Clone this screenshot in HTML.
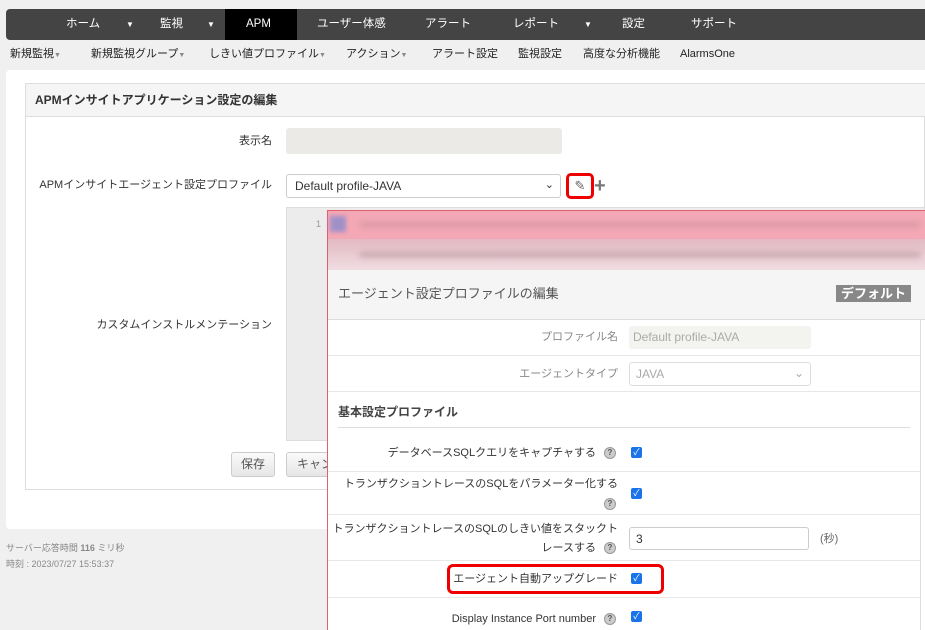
<!DOCTYPE html>
<html><head><meta charset="utf-8"><style>
*{box-sizing:border-box;margin:0;padding:0}
body{width:925px;height:630px;overflow:hidden;background:#f0f0f0;font-family:"Liberation Sans","Noto Sans CJK JP",sans-serif;font-size:11px;color:#333;position:relative}
.a{position:absolute;white-space:nowrap}
.nav{left:6px;top:9px;width:919px;height:31px;background:#444;border-radius:4px 0 0 4px}
.nav span{position:absolute;top:0;line-height:31px;color:#fff;font-size:11.5px}
.sub span{position:absolute;top:46px;font-size:11px;line-height:16px;color:#222}
.car{font-size:7px;color:#888;font-style:normal}
.lbl{text-align:right;font-size:11px;color:#333;line-height:16px}
.cb{width:11px;height:11px;background:#1a73e8;border-radius:2px;color:#fff;font-size:9px;line-height:11px;text-align:center}
.q{width:12px;height:12px;border-radius:50%;background:#ccc;border:1px solid #999;color:#555;font-size:8px;line-height:10px;text-align:center;font-weight:bold}
.ln{height:1px;background:#e8e8e8}
</style></head><body>
<div class="a nav">
<span style="left:60px">ホーム</span><span style="left:120px;font-size:8px">▼</span>
<span style="left:154px">監視</span><span style="left:201px;font-size:8px">▼</span>
<div class="a" style="left:219px;top:0;width:72px;height:31px;background:#000"></div>
<span style="left:240px">APM</span>
<span style="left:311px">ユーザー体感</span>
<span style="left:419px">アラート</span>
<span style="left:507px">レポート</span><span style="left:578px;font-size:8px">▼</span>
<span style="left:616px">設定</span>
<span style="left:685px">サポート</span>
</div>
<div class="sub">
<span style="left:10px">新規監視<i class="car">▼</i></span>
<span style="left:91px">新規監視グループ<i class="car">▼</i></span>
<span style="left:209px">しきい値プロファイル<i class="car">▼</i></span>
<span style="left:346px">アクション<i class="car">▼</i></span>
<span style="left:432px">アラート設定</span>
<span style="left:518px">監視設定</span>
<span style="left:583px">高度な分析機能</span>
<span style="left:680px">AlarmsOne</span>
</div>
<div class="a" style="left:6px;top:70px;width:919px;height:459px;background:#fff;border-radius:4px 0 0 4px"></div>
<div class="a" style="left:25px;top:83px;width:900px;height:407px;border:1px solid #ddd;background:#fff"></div>
<div class="a" style="left:26px;top:84px;width:899px;height:33px;background:#f5f5f5;border-bottom:1px solid #ddd;font-weight:bold;line-height:32px;padding-left:9px;font-size:12px">APMインサイトアプリケーション設定の編集</div>
<div class="a lbl" style="left:100px;top:133px;width:172px">表示名</div>
<div class="a" style="left:286px;top:128px;width:276px;height:26px;background:#eceae6;border-radius:3px"></div>
<div class="a lbl" style="left:20px;top:177px;width:252px">APMインサイトエージェント設定プロファイル</div>
<div class="a" style="left:286px;top:174px;width:275px;height:24px;border:1px solid #ccc;border-radius:3px;padding:4px 8px;font-size:12px;line-height:15px">Default profile-JAVA<span style="position:absolute;right:6px;top:3px;font-size:11px">⌄</span></div>
<div class="a" style="left:566px;top:173px;width:28px;height:26px;border:3px solid #e00;border-radius:5px;color:#666;text-align:center;line-height:20px;font-size:13px">✎</div>
<div class="a" style="left:594px;top:174px;font-size:20px;color:#777;font-weight:bold;line-height:24px">+</div>
<div class="a lbl" style="left:60px;top:317px;width:212px">カスタムインストルメンテーション</div>
<div class="a" style="left:286px;top:207px;width:639px;height:234px;background:#ececec;border:1px solid #ddd"></div>
<div class="a" style="left:316px;top:219px;font-size:9px;color:#999">1</div>
<div class="a" style="left:231px;top:452px;width:44px;height:25px;border:1px solid #ccc;border-radius:3px;background:linear-gradient(#fafafa,#e6e6e6);text-align:center;line-height:23px;color:#555;font-size:12px">保存</div>
<div class="a" style="left:286px;top:452px;width:50px;height:25px;border:1px solid #ccc;border-radius:3px;background:linear-gradient(#fafafa,#e6e6e6);line-height:23px;padding-left:10px;color:#555;font-size:12px;overflow:hidden">キャン</div>
<div class="a" style="left:6px;top:541px;font-size:9px;color:#888">サーバー応答時間 <b>116</b> ミリ秒</div>
<div class="a" style="left:6px;top:557px;font-size:9px;color:#888">時刻 : 2023/07/27 15:53:37</div>
<!-- overlay -->
<div class="a" style="left:327px;top:210px;width:598px;height:420px;border-left:1px solid #e06070;border-top:1px solid #e06070;background:#fff"></div>
<div class="a" style="left:328px;top:211px;width:597px;height:28px;background:#f4a8b5"></div>
<div class="a" style="left:330px;top:216px;width:16px;height:16px;background:#a090c8;filter:blur(2px)"></div>
<div class="a" style="left:360px;top:222px;width:560px;height:5px;background:#d898a5;filter:blur(3px)"></div>
<div class="a" style="left:328px;top:239px;width:597px;height:31px;background:linear-gradient(#e2b9c2,#f0dde2)"></div>
<div class="a" style="left:360px;top:252px;width:560px;height:5px;background:#c7a5ad;filter:blur(3px)"></div>
<div class="a" style="left:328px;top:270px;width:597px;height:50px;background:#f5f5f5;border-bottom:1px solid #ddd"></div>
<div class="a" style="left:338px;top:285px;font-size:13px;color:#555;line-height:18px">エージェント設定プロファイルの編集</div>
<div class="a" style="left:836px;top:285px;width:75px;height:17px;background:#888;color:#fff;font-weight:bold;font-size:13px;text-align:center;line-height:17px">デフォルト</div>
<div class="a" style="left:920px;top:320px;width:1px;height:310px;background:#ddd"></div>
<div class="a lbl" style="left:340px;top:329px;width:278px;color:#888">プロファイル名</div>
<div class="a" style="left:629px;top:326px;width:182px;height:23px;background:#f3f3f0;border-radius:3px;color:#aaa;padding:4px 4px;font-size:12px;line-height:15px">Default profile-JAVA</div>
<div class="a ln" style="left:328px;top:355px;width:592px"></div>
<div class="a lbl" style="left:340px;top:366px;width:278px;color:#888">エージェントタイプ</div>
<div class="a" style="left:629px;top:362px;width:182px;height:24px;border:1px solid #ddd;border-radius:3px;color:#aaa;padding:4px 6px;line-height:15px;font-size:12px">JAVA<span style="position:absolute;right:6px;top:3px">⌄</span></div>
<div class="a ln" style="left:328px;top:391px;width:592px"></div>
<div class="a" style="left:338px;top:404px;font-weight:bold;color:#444;font-size:12px;line-height:16px">基本設定プロファイル</div>
<div class="a" style="left:338px;top:427px;width:572px;height:1px;background:#ddd"></div>
<div class="a lbl" style="left:330px;top:445px;width:266px">データベースSQLクエリをキャプチャする</div>
<div class="a q" style="left:604px;top:447px">?</div><div class="a cb" style="left:631px;top:447px">✓</div>
<div class="a ln" style="left:328px;top:471px;width:592px"></div>
<div class="a lbl" style="left:330px;top:476px;width:288px">トランザクショントレースのSQLをパラメーター化する</div>
<div class="a q" style="left:604px;top:498px">?</div><div class="a cb" style="left:631px;top:488px">✓</div>
<div class="a ln" style="left:328px;top:514px;width:592px"></div>
<div class="a lbl" style="left:330px;top:521px;width:288px">トランザクショントレースのSQLのしきい値をスタックト</div>
<div class="a lbl" style="left:330px;top:540px;width:266px">レースする</div>
<div class="a q" style="left:604px;top:542px">?</div>
<div class="a" style="left:629px;top:527px;width:180px;height:23px;border:1px solid #ccc;border-radius:3px;padding:4px 6px;font-size:12px;line-height:14px">3</div>
<div class="a" style="left:820px;top:531px;color:#666;line-height:16px">(秒)</div>
<div class="a ln" style="left:328px;top:560px;width:592px"></div>
<div class="a" style="left:447px;top:564px;width:217px;height:30px;border:3px solid #e00;border-radius:6px"></div>
<div class="a lbl" style="left:330px;top:571px;width:288px">エージェント自動アップグレード</div>
<div class="a cb" style="left:631px;top:573px">✓</div>
<div class="a ln" style="left:328px;top:597px;width:592px"></div>
<div class="a lbl" style="left:330px;top:611px;width:266px;font-size:11px">Display Instance Port number</div>
<div class="a q" style="left:604px;top:613px">?</div><div class="a cb" style="left:631px;top:611px">✓</div>
</body></html>
